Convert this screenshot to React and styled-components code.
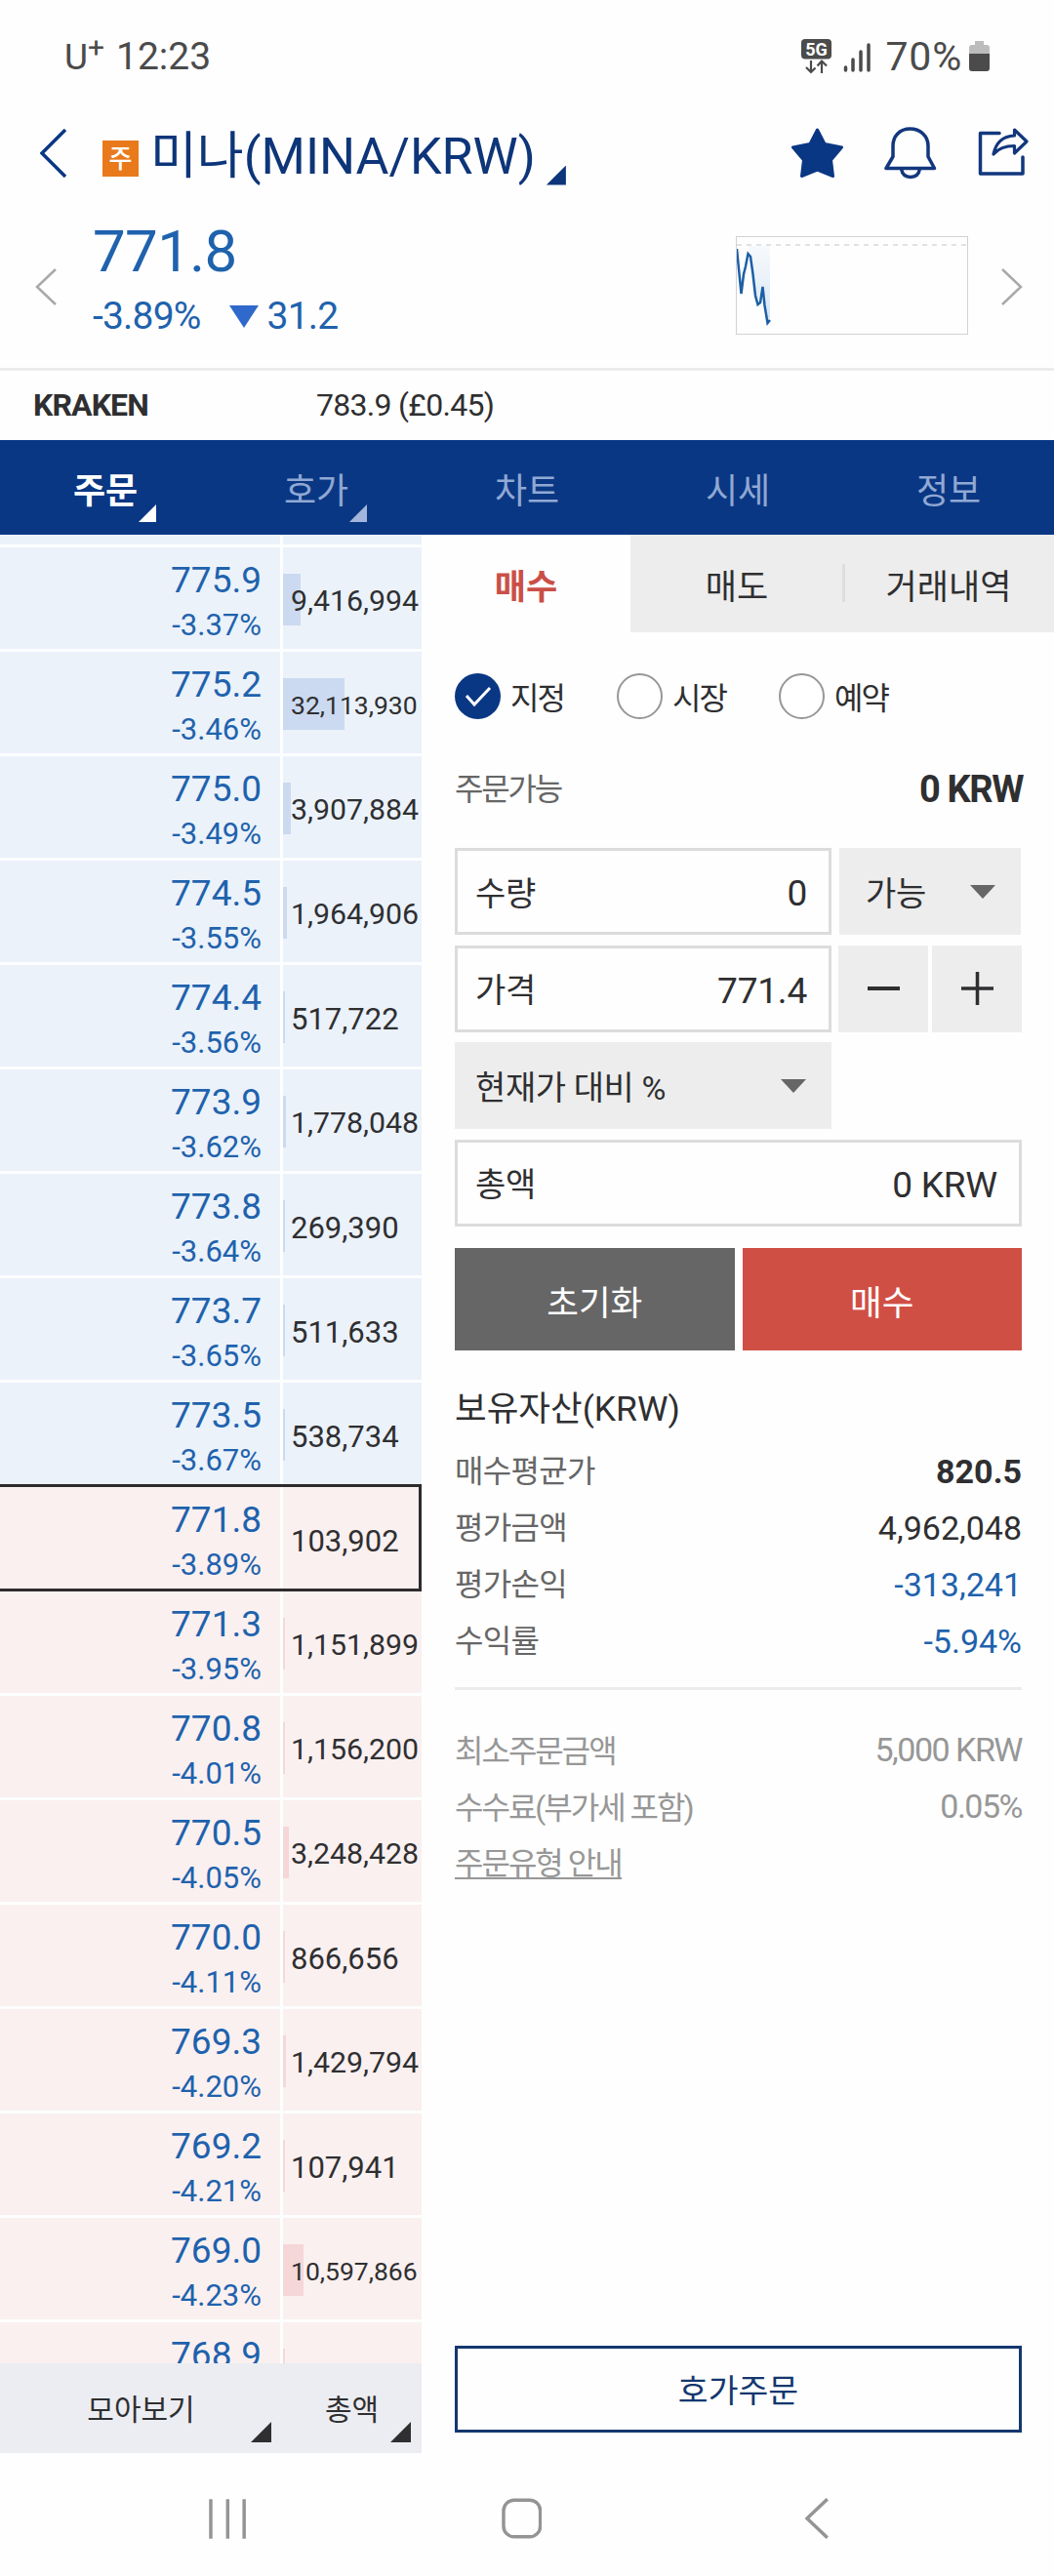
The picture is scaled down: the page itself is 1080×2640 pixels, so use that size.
import React, { useState } from 'react';
import styled, { createGlobalStyle, css } from 'styled-components';

const GlobalStyle = createGlobalStyle`
  * {
    box-sizing: border-box;
  }

  body {
    margin: 0;
    background-color: #fefefe;
    color: #2f2f31;
    font-family: Roboto, 'Noto Sans CJK KR', sans-serif;
  }

  button {
    margin: 0;
    padding: 0;
    border: 0;
    background: none;
    color: inherit;
    font: inherit;
    letter-spacing: inherit;
  }
`;

const Screen = styled.div`
  width: 1080px;
  height: 2640px;
  display: flex;
  flex-direction: column;
  overflow: hidden;
  line-height: 1;
  white-space: nowrap;
`;

/* status bar */

const StatusBar = styled.div`
  height: 116px;
  padding: 0 66px;
  display: flex;
  justify-content: space-between;
  align-items: center;
  color: #4b4b4b;
  font-size: 39px;
`;

const StatusGroup = styled.div`
  display: flex;
  align-items: center;
`;

const Carrier = styled.span`
  margin-right: 12px;
  font-size: 37px;

  sup {
    font-size: 30px;
    line-height: 0;
    vertical-align: 12px;
  }
`;

const Percent = styled.span`
  margin: 0 7px 0 14px;
  font-size: 41px;
  letter-spacing: 0.8px;
`;

/* title */

const Header = styled.header`
  height: 82px;
  padding: 0 26px 0 41px;
  display: flex;
  align-items: center;
`;

const CoinBadge = styled.span`
  width: 37px;
  height: 37px;
  margin: 11px 12px 0 36px;
  display: flex;
  align-items: center;
  justify-content: center;
  background-color: #e87a1c;
  color: #fff;
  font-size: 26px;
  font-weight: 500;
`;

const Title = styled.h1`
  margin: 7px 0 0;
  flex: 1;
  display: flex;
  align-items: center;
  color: #0d3579;
  font-size: 52px;
  font-weight: 400;
`;

const Corner = styled.i`
  width: ${(props) => props.$size || 18}px;
  height: ${(props) => props.$size || 18}px;
  background-color: ${(props) => props.$color || '#2f2f31'};
  clip-path: polygon(100% 0, 100% 100%, 0 100%);
`;

const TitleCorner = styled(Corner)`
  margin: 38px 0 0 11px;
`;

const HeaderIcons = styled.div`
  display: flex;
  align-items: center;
  gap: 42px;
`;

/* price summary */

const Summary = styled.section`
  height: 182px;
  padding: 0 32px 0 36px;
  display: flex;
  align-items: center;
  border-bottom: 3px solid #ececec;
  color: #1f62ad;

  > svg {
    margin-top: 12px;
  }
`;

const SummaryText = styled.div`
  flex: 1;
  margin: -3px 0 0 36px;
`;

const BigPrice = styled.div`
  font-size: 60px;
  line-height: 60px;
  letter-spacing: -0.6px;
`;

const Change = styled.div`
  margin-top: 17px;
  display: flex;
  align-items: center;
  font-size: 39px;
  letter-spacing: -0.8px;

  svg {
    margin: 0 9px 0 29px;
  }
`;

const ChartBox = styled.div`
  width: 238px;
  height: 101px;
  margin: 9px 33px 0 0;
  border: 1px solid #d2d2d2;
`;

const Exchange = styled.div`
  height: 71px;
  padding: 0 34px 2px;
  display: flex;
  align-items: center;
  color: #2f2f31;
  font-size: 32px;
  letter-spacing: -0.7px;

  b {
    width: 290px;
    letter-spacing: -0.9px;
  }
`;

/* main tabs */

const MainTabs = styled.nav`
  height: 97px;
  display: grid;
  grid-template-columns: repeat(5, 1fr);
  background-color: #0a3784;
`;

const MainTab = styled.button`
  position: relative;
  display: flex;
  align-items: center;
  justify-content: center;
  padding-top: 8px;
  color: ${(props) => (props.$active ? '#fff' : '#90a8d3')};
  font-size: 36px;
  font-weight: ${(props) => (props.$active ? 700 : 400)};

  ${Corner} {
    position: absolute;
    right: 56px;
    bottom: 13px;
  }
`;

const Content = styled.main`
  height: 1966px;
  display: flex;
`;

/* order book */

const Book = styled.section`
  width: 432px;
  display: flex;
  flex-direction: column;
`;

const BookRows = styled.div`
  height: 1874px;
  overflow: hidden;
  background-color: #fdfeff;
`;

const BookRow = styled.div`
  position: relative;
  height: ${(props) => (props.$cut ? '10px' : '104px')};
  margin-bottom: 3px;
  display: grid;
  grid-template-columns: 287px 142px;
  column-gap: 3px;

  > div {
    background-color: ${(props) => (props.$side === 'ask' ? '#ebf2fa' : '#faf0f0')};
  }

  ${(props) =>
    props.$current &&
    css`
      &::after {
        content: '';
        position: absolute;
        inset: -3px 0 -3px 0;
        border: 3px solid #2f2b2d;
        border-left: 0;
      }
    `}
`;

const PriceCell = styled.div`
  padding: 15px 19px 0 0;
  color: #1f62ad;
  text-align: right;
  font-size: 37px;
  line-height: 37px;

  small {
    display: block;
    margin-top: 12px;
    font-size: 31px;
    line-height: 31px;
  }
`;

const VolumeCell = styled.div`
  display: grid;
  align-items: center;

  > * {
    grid-area: 1 / 1;
  }
`;

const VolumeBar = styled.span`
  height: 53px;
  min-width: 2px;
  margin-top: 2px;
  background-color: ${(props) => (props.$side === 'ask' ? '#cbdaf0' : '#f5d7d8')};
`;

const Volume = styled.span`
  position: relative;
  padding: 7px 0 0 8px;
  font-size: ${(props) => props.$size}px;
`;

const BookFooter = styled.div`
  height: 92px;
  display: grid;
  grid-template-columns: 289px 143px;
  background-color: #ecedf2;
  font-size: 30px;
`;

const FooterButton = styled.button`
  position: relative;
  padding-top: 3px;
  display: flex;
  align-items: center;
  justify-content: center;

  ${Corner} {
    position: absolute;
    right: 11px;
    bottom: 11px;
  }
`;

/* order form */

const Order = styled.section`
  flex: 1;
  display: flex;
  flex-direction: column;
`;

const OrderTabs = styled.div`
  height: 100px;
  display: grid;
  grid-template-columns: 214px 218px 216px;
`;

const OrderTab = styled.button`
  position: relative;
  padding-top: 9px;
  background-color: ${(props) => (props.$active ? 'transparent' : '#ededed')};
  color: ${(props) => (props.$active ? '#cb4f47' : '#2f2f31')};
  font-size: 35px;
  font-weight: ${(props) => (props.$active ? 700 : 400)};

  &:last-child::before {
    content: '';
    position: absolute;
    left: -1px;
    top: 30px;
    width: 3px;
    height: 39px;
    background-color: #dedede;
  }
`;

const OrderBody = styled.div`
  flex: 1;
  padding: 42px 34px 21px;
  display: flex;
  flex-direction: column;
`;

const RadioRow = styled.div`
  display: flex;
`;

const RadioLabel = styled.label`
  width: 166px;
  height: 47px;
  display: flex;
  align-items: center;
  gap: 10px;
  font-size: 32px;
  letter-spacing: -2px;

  > span:last-child {
    padding-top: 4px;
  }
`;

const RadioMark = styled.span`
  width: 47px;
  height: 47px;
  display: flex;
  align-items: center;
  justify-content: center;
  border: ${(props) => (props.$checked ? '0' : '2px solid #979797')};
  border-radius: 50%;
  background-color: ${(props) => (props.$checked ? '#0a3784' : '#fff')};
`;

const Available = styled.div`
  height: 40px;
  margin: 52px 0 40px;
  display: flex;
  align-items: center;
  justify-content: space-between;
  color: #666;
  font-size: 32px;
  letter-spacing: -2.2px;

  b {
    margin-right: -1px;
    color: #2f2f31;
    font-size: 38px;
    letter-spacing: -1.4px;
  }
`;

const FieldRow = styled.div`
  height: 89px;
  margin-bottom: 10.6px;
  display: flex;
  gap: ${(props) => props.$gap || 8}px;
`;

const Field = styled.div`
  width: ${(props) => (props.$wide ? '100%' : '386px')};
  padding: ${(props) => (props.$wide ? '4px 22px 0 18px' : '4px 22px 0 18px')};
  display: flex;
  align-items: center;
  justify-content: space-between;
  border: 3px solid #dcdcdc;
  font-size: 34px;
  letter-spacing: -0.2px;

  span:last-child {
    font-size: 37px;
  }
`;

const Select = styled.button`
  width: ${(props) => props.$width}px;
  padding: 5px 26px 0 ${(props) => props.$left}px;
  display: flex;
  align-items: center;
  justify-content: space-between;
  background-color: #ededed;
  font-size: 34px;
  letter-spacing: -0.4px;

  svg {
    margin-top: -5px;
  }
`;

const StepButton = styled.button`
  width: 92px;
  display: flex;
  align-items: center;
  justify-content: center;
  background-color: #ededed;

  &:nth-child(2) {
    margin-left: 3px;
  }
`;

const Actions = styled.div`
  height: 105px;
  margin-top: 12px;
  display: grid;
  grid-template-columns: 1fr 1fr;
  gap: 8px;
`;

const ActionButton = styled.button`
  padding-top: 9px;
  background-color: ${(props) => (props.$buy ? '#d04f45' : '#666')};
  color: #fff;
  font-size: 35.5px;
`;

const AssetTitle = styled.h2`
  margin: 38px 0 13px;
  font-size: 35.5px;
  line-height: 44px;
  font-weight: 400;
`;

const InfoRow = styled.div`
  height: 58px;
  display: flex;
  align-items: center;
  justify-content: space-between;
  color: ${(props) => (props.$muted ? '#979797' : '#666')};
  font-size: 32px;
  letter-spacing: ${(props) => (props.$muted ? '-2px' : '-0.7px')};
`;

const InfoValue = styled.span`
  margin-top: ${(props) => (props.$raised ? '-5px' : '0')};
  color: ${(props) => props.$color || '#2f2f31'};
  font-size: 34px;
  font-weight: ${(props) => (props.$bold ? 700 : 400)};
  letter-spacing: ${(props) => (props.$raised ? '-1.5px' : '0')};
`;

const Divider = styled.hr`
  width: 100%;
  height: 3px;
  margin: 18px 0 34px;
  border: 0;
  background-color: #ececec;
`;

const GuideLink = styled.a`
  border-bottom: 2px solid #979797;
  line-height: 28px;
`;

const QuoteOrderButton = styled.button`
  height: 89px;
  margin-top: auto;
  padding-top: 4px;
  border: 3px solid #14376f;
  color: #14376f;
  font-size: 33.5px;
`;

const SystemNav = styled.div`
  flex: 1;
  padding: 8px 230px 0 214px;
  display: flex;
  align-items: center;
`;

const HomeIcon = styled.svg`
  margin: 0 270px 0 261px;
`;

const ROWS = [
  ['775.9', '-3.37%', 9416994],
  ['775.2', '-3.46%', 32113930],
  ['775.0', '-3.49%', 3907884],
  ['774.5', '-3.55%', 1964906],
  ['774.4', '-3.56%', 517722],
  ['773.9', '-3.62%', 1778048],
  ['773.8', '-3.64%', 269390],
  ['773.7', '-3.65%', 511633],
  ['773.5', '-3.67%', 538734],
  ['771.8', '-3.89%', 103902],
  ['771.3', '-3.95%', 1151899],
  ['770.8', '-4.01%', 1156200],
  ['770.5', '-4.05%', 3248428],
  ['770.0', '-4.11%', 866656],
  ['769.3', '-4.20%', 1429794],
  ['769.2', '-4.21%', 107941],
  ['769.0', '-4.23%', 10597866],
  ['768.9', null, null],
];

const CURRENT = '771.8';
const ASK_COUNT = 9;
const MAIN_TABS = ['주문', '호가', '차트', '시세', '정보'];
const ORDER_TABS = ['매수', '매도', '거래내역'];
const ORDER_TYPES = ['지정', '시장', '예약'];

// long volumes shrink to stay inside the column
const volumeSize = (volume) => {
  if (volume >= 10000000) return 26.5;
  return volume >= 1000000 ? 30.3 : 31;
};

const Chevron = ({ w, h, color, stroke, right }) => (
  <svg width={w} height={h} viewBox={`0 0 ${w} ${h}`} fill="none">
    <path
      d={right ? `M2 1 L${w - 2} ${h / 2} L2 ${h - 1}` : `M${w - 2} 1 L2 ${h / 2} L${w - 2} ${h - 1}`}
      stroke={color}
      strokeWidth={stroke}
    />
  </svg>
);

const Caret = () => (
  <svg width="26" height="14" viewBox="0 0 26 14">
    <path d="M0 0H26L13 14Z" fill="#666" />
  </svg>
);

const StatusIcons = () => (
  <svg width="72" height="36" viewBox="0 0 72 36">
    <rect x="0" y="0" width="31" height="20.500" rx="4" fill="#4b4b4b" />
    <text x="15.5" y="16.5" textAnchor="middle" fontSize="18" fontWeight="700" fill="#fff">5G</text>
    <path d="M10 22V34M5 29L10 34L14.500 29.500M21 35V23M16.500 27.500L21 22.500L26 27.500" fill="none" stroke="#4b4b4b" strokeWidth="2.200" />
    <path d="M45.500 29V32M53 21V32M61 13V32M69 6V32" stroke="#4b4b4b" strokeWidth="3.500" strokeLinecap="round" />
  </svg>
);

const Battery = () => (
  <svg width="21" height="32" viewBox="0 0 21 32">
    <path d="M6 0H15V4H18Q21 4 21 7V13H0V7Q0 4 3 4H6Z" fill="#bcbcbc" />
    <path d="M0 13H21V28Q21 31 18 31H3Q0 31 0 28Z" fill="#4b4b4b" />
  </svg>
);

const StarIcon = () => (
  <svg width="53" height="53" viewBox="0 0 53 53">
    <path
      d="M26.500 2L34 16.500L51.500 20L40.500 33L42.500 49.500L26.500 43L10.500 49.500L12.500 33L1.500 20L19 16.500Z"
      fill="#0a3784"
      stroke="#0a3784"
      strokeWidth="3"
      strokeLinejoin="round"
    />
  </svg>
);

const BellIcon = () => (
  <svg width="54" height="54" viewBox="0 0 54 54" fill="none" stroke="#12377d" strokeWidth="3.500" strokeLinejoin="round">
    <path d="M26.500 2C16 2 9 9.500 9 19.500V30.500L2 42.500H51.500L45 30.500V19.500C45 9.500 37 2 26.500 2Z" />
    <path d="M17.500 43C18.500 48.500 22 51.500 27 51.500S35.500 48.500 36.500 43" />
  </svg>
);

const ShareIcon = () => (
  <svg width="52" height="52" viewBox="0 0 52 52" fill="none" stroke="#12377d" strokeWidth="3.500" strokeLinejoin="round" strokeLinecap="round">
    <path d="M22 5.500H2.500V47H46V30" />
    <path d="M37.500 2L50 14L37.500 26V18.500C28 18.500 21.500 20.500 16 27C18.500 15 26 8.500 37.500 8Z" strokeWidth="3.200" />
  </svg>
);

const MiniChart = () => (
  <svg width="236" height="99" viewBox="0 0 236 99" fill="none">
    <defs>
      <linearGradient id="fade" x1="0" y1="0" x2="0" y2="1">
        <stop offset="0" stopColor="#e4edf6" stopOpacity="0.300" />
        <stop offset="1" stopColor="#d3e4f4" />
      </linearGradient>
    </defs>
    <path d="M14 20L18 42L21 68L26 50L29 74L31 86L34 83V9H11Z" fill="url(#fade)" />
    <path d="M0 8H236" stroke="#e2e2e2" strokeWidth="2" strokeDasharray="5 5" />
    <path d="M0 12L4.500 58L7 38L9 30L11.500 17L14 20L16.500 38L19 60L21.500 69L24 67L26.500 51L28.500 70L31.500 88L34 85" stroke="#1c5fa6" strokeWidth="2.500" />
  </svg>
);

function App() {
  const [orderType, setOrderType] = useState('지정');

  return (
    <>
      <GlobalStyle />
      <Screen>
        <StatusBar>
          <StatusGroup>
            <Carrier>U<sup>+</sup></Carrier>
            <span>12:23</span>
          </StatusGroup>
          <StatusGroup>
            <StatusIcons />
            <Percent>70%</Percent>
            <Battery />
          </StatusGroup>
        </StatusBar>

        <Header>
          <Chevron w={28} h={50} color="#0a3784" stroke={3.5} />
          <CoinBadge>주</CoinBadge>
          <Title>
            미나(MINA/KRW)
            <TitleCorner $size={20} $color="#0d3579" />
          </Title>
          <HeaderIcons>
            <StarIcon />
            <BellIcon />
            <ShareIcon />
          </HeaderIcons>
        </Header>

        <Summary>
          <Chevron w={23} h={38} color="#a9a9a9" stroke={2.5} />
          <SummaryText>
            <BigPrice>771.8</BigPrice>
            <Change>
              -3.89%
              <svg width="30" height="23" viewBox="0 0 30 23">
                <path d="M0 0H30L15 23Z" fill="#2e69cb" />
              </svg>
              31.2
            </Change>
          </SummaryText>
          <ChartBox>
            <MiniChart />
          </ChartBox>
          <Chevron w={23} h={38} color="#a9a9a9" stroke={2.5} right />
        </Summary>

        <Exchange>
          <b>KRAKEN</b>
          <span>783.9 (£0.45)</span>
        </Exchange>

        <MainTabs>
          {MAIN_TABS.map((tab, i) => (
            <MainTab key={tab} $active={i === 0}>
              {tab}
              {i < 2 && <Corner $color={i === 0 ? '#fff' : '#a3b5da'} />}
            </MainTab>
          ))}
        </MainTabs>

        <Content>
          <Book>
            <BookRows>
              <BookRow $cut $side="ask">
                <div />
                <div />
              </BookRow>
              {ROWS.map(([price, rate, volume], i) => {
                const side = i < ASK_COUNT ? 'ask' : 'bid';
                return (
                  <BookRow key={price} $side={side} $current={price === CURRENT}>
                    <PriceCell>
                      {price}
                      {rate && <small>{rate}</small>}
                    </PriceCell>
                    <VolumeCell>
                      {price !== CURRENT && (
                        <VolumeBar $side={side} style={{ width: ((volume || 0) * 63) / 32113930 }} />
                      )}
                      {volume && <Volume $size={volumeSize(volume)}>{volume.toLocaleString('en-US')}</Volume>}
                    </VolumeCell>
                  </BookRow>
                );
              })}
            </BookRows>
            <BookFooter>
              <FooterButton>
                모아보기
                <Corner $size={21} />
              </FooterButton>
              <FooterButton>
                총액
                <Corner $size={21} />
              </FooterButton>
            </BookFooter>
          </Book>

          <Order>
            <OrderTabs>
              {ORDER_TABS.map((tab, i) => (
                <OrderTab key={tab} $active={i === 0}>{tab}</OrderTab>
              ))}
            </OrderTabs>

            <OrderBody>
              <RadioRow>
                {ORDER_TYPES.map((type) => (
                  <RadioLabel key={type} onClick={() => setOrderType(type)}>
                    <RadioMark $checked={orderType === type}>
                      {orderType === type && (
                        <svg width="28" height="22" viewBox="0 0 28 22">
                          <path d="M2 10L10 19L26 2" fill="none" stroke="#fff" strokeWidth="3" />
                        </svg>
                      )}
                    </RadioMark>
                    <span>{type}</span>
                  </RadioLabel>
                ))}
              </RadioRow>

              <Available>
                주문가능
                <b>0 KRW</b>
              </Available>

              <FieldRow>
                <Field>
                  <span>수량</span>
                  <span>0</span>
                </Field>
                <Select $width={186} $left={27}>
                  가능
                  <Caret />
                </Select>
              </FieldRow>
              <FieldRow $gap={4}>
                <Field>
                  <span>가격</span>
                  <span>771.4</span>
                </Field>
                <StepButton>
                  <svg width="33" height="34" viewBox="0 0 33 34">
                    <path d="M0 17H33" stroke="#2f2f31" strokeWidth="4" />
                  </svg>
                </StepButton>
                <StepButton>
                  <svg width="33" height="34" viewBox="0 0 33 34">
                    <path d="M0 17H33M16.500 0V34" stroke="#2f2f31" strokeWidth="3.500" />
                  </svg>
                </StepButton>
              </FieldRow>
              <FieldRow>
                <Select $width={386} $left={21}>
                  현재가 대비 %
                  <Caret />
                </Select>
              </FieldRow>
              <FieldRow>
                <Field $wide>
                  <span>총액</span>
                  <span>0 KRW</span>
                </Field>
              </FieldRow>

              <Actions>
                <ActionButton>초기화</ActionButton>
                <ActionButton $buy>매수</ActionButton>
              </Actions>

              <AssetTitle>보유자산(KRW)</AssetTitle>
              <InfoRow>
                매수평균가
                <InfoValue $bold>820.5</InfoValue>
              </InfoRow>
              <InfoRow>
                평가금액
                <InfoValue>4,962,048</InfoValue>
              </InfoRow>
              <InfoRow>
                평가손익
                <InfoValue $color="#1f62ad">-313,241</InfoValue>
              </InfoRow>
              <InfoRow>
                수익률
                <InfoValue $color="#1f62ad">-5.94%</InfoValue>
              </InfoRow>

              <Divider />

              <InfoRow $muted>
                최소주문금액
                <InfoValue $color="#979797" $raised>5,000 KRW</InfoValue>
              </InfoRow>
              <InfoRow $muted>
                수수료(부가세 포함)
                <InfoValue $color="#979797" $raised>0.05%</InfoValue>
              </InfoRow>
              <InfoRow $muted>
                <GuideLink>주문유형 안내</GuideLink>
              </InfoRow>

              <QuoteOrderButton>호가주문</QuoteOrderButton>
            </OrderBody>
          </Order>
        </Content>

        <SystemNav>
          <svg width="39" height="41" viewBox="0 0 39 41">
            <path d="M2 0V41M19.500 0V41M36.500 0V41" stroke="#949494" strokeWidth="3.500" />
          </svg>
          <HomeIcon width="42" height="42" viewBox="0 0 42 42">
            <rect x="2" y="2" width="38" height="38" rx="11" fill="none" stroke="#949494" strokeWidth="3.500" />
          </HomeIcon>
          <Chevron w={25} h={42} color="#949494" stroke={3.5} />
        </SystemNav>
      </Screen>
    </>
  );
}

export default App;
